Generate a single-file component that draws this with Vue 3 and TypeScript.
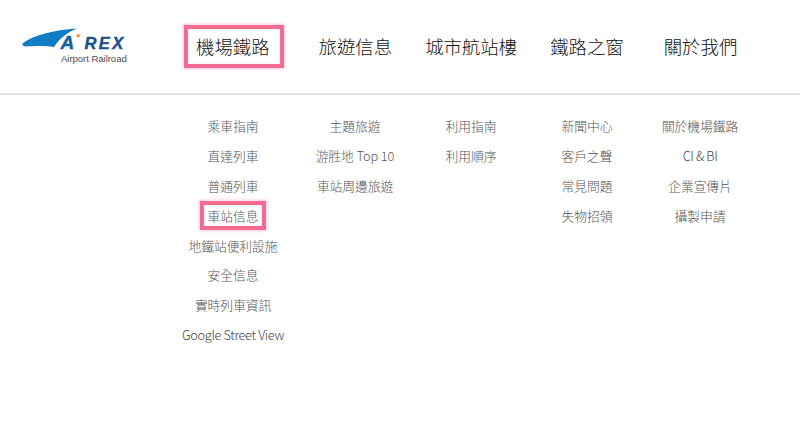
<script setup lang="ts">
const navItems = ['機場鐵路', '旅遊信息', '城市航站樓', '鐵路之窗', '關於我們']

const columns: string[][] = [
  ['乘車指南', '直達列車', '普通列車', '車站信息', '地鐵站便利設施', '安全信息', '實時列車資訊', 'Google Street View'],
  ['主題旅遊', '游胜地 Top 10', '車站周邊旅遊'],
  ['利用指南', '利用順序'],
  ['新聞中心', '客戶之聲', '常見問題', '失物招領'],
  ['關於機場鐵路', 'CI & BI', '企業宣傳片', '攝製申請'],
]

const isLatin = (s: string) => /^[\x20-\x7e]+$/.test(s)
</script>

<template>
  <div class="page">
    <header class="header">
      <a class="logo">
        <svg width="108" height="38" viewBox="0 0 108 38">
          <path d="M0.5 16.5C11 8 32 3 55 1.5C46 5 38 11 32 20C24 18.5 11 19 4 19.5C1 19.5 0 18 0.5 16.5Z" fill="#0f7cc4" />
          <text x="38.5" y="21.5" class="logo-mark a">A</text>
          <path d="M56 6l.9 1.7 1.9-.3-1.3 1.4.8 1.8-1.8-.8-1.5 1.2.3-2-1.6-1.1 1.9-.4Z" fill="#e8912d" />
          <text x="62.5" y="21.5" class="logo-mark" letter-spacing="2.4">REX</text>
          <text x="39" y="34.5" class="logo-sub">Airport Railroad</text>
        </svg>
      </a>
      <nav class="nav">
        <a v-for="(item, i) in navItems" :key="item" class="nav-item" :class="{ active: i === 0 }">{{ item }}</a>
      </nav>
    </header>
    <div class="submenu">
      <ul v-for="(col, c) in columns" :key="c" class="sub-col">
        <li v-for="link in col" :key="link">
          <a class="sub-link" :class="{ active: link === '車站信息', latin: isLatin(link) }">{{ link }}</a>
        </li>
      </ul>
    </div>
  </div>
</template>

<style scoped>
.page {
  width: 800px;
  height: 433px;
  overflow: hidden;
  background: #fff;
  font-family: "Noto Sans CJK TC", "Noto Sans", sans-serif;
}
.header {
  display: flex;
  align-items: flex-start;
  height: 93px;
  border-bottom: 2px solid #e2e2e2;
  box-sizing: content-box;
}
.logo {
  display: block;
  width: 184px;
  height: 38px;
  margin-top: 27px;
  padding-left: 22px;
  box-sizing: border-box;
}
.logo-mark {
  font-family: "Liberation Sans", sans-serif;
  font-size: 16.5px;
  font-weight: 700;
  font-style: italic;
  fill: #1c4f8e;
  stroke: #1c4f8e;
  stroke-width: 0.4px;
}
.logo-mark.a {
  font-size: 19px;
  fill: #17609f;
  stroke: #17609f;
}
.logo-sub {
  font-family: "Liberation Sans", sans-serif;
  font-size: 9.7px;
  letter-spacing: -0.1px;
  fill: #4c5158;
}
.nav {
  display: flex;
  margin-top: 25px;
}
.nav-item {
  display: flex;
  align-items: center;
  justify-content: center;
  height: 43px;
  padding: 0 10px 2px 8px;
  border: 4px solid transparent;
  box-sizing: border-box;
  font-size: 18.4px;
  font-weight: 300;
  color: #111;
  white-space: nowrap;
}
.nav-item:nth-child(2) { margin-left: 23px; }
.nav-item:nth-child(3) { margin-left: 7px; }
.nav-item:nth-child(4) { margin-left: 7px; }
.nav-item:nth-child(5) { margin-left: 14px; }
.active {
  border: 4px solid #f26c91;
  box-shadow: 0 0 3px 1px #f9c8e2, inset 0 0 2px #fbd5e8;
}
.submenu {
  display: grid;
  grid-template-columns: 116px 128px 104px 128px 98px;
  margin-left: 175px;
  padding-top: 16px;
}
.sub-col {
  list-style: none;
  margin: 0;
  padding: 0;
  text-align: center;
}
.sub-col li {
  height: 29.8px;
  display: flex;
  align-items: center;
  justify-content: center;
}
.sub-link {
  font-size: 12.8px;
  font-weight: 300;
  letter-spacing: -0.1px;
  color: #555;
  white-space: nowrap;
  border: 4px solid transparent;
  padding: 1px 4px;
}
.sub-link.latin {
  letter-spacing: -0.35px;
  color: #444;
}
.sub-link.active {
  border-color: #f26c91;
  box-shadow: 0 0 3px 1px #f9c8e2, inset 0 0 2px #fbd5e8;
}
</style>

<style>
html, body { margin: 0; background: #fff; }
</style>
